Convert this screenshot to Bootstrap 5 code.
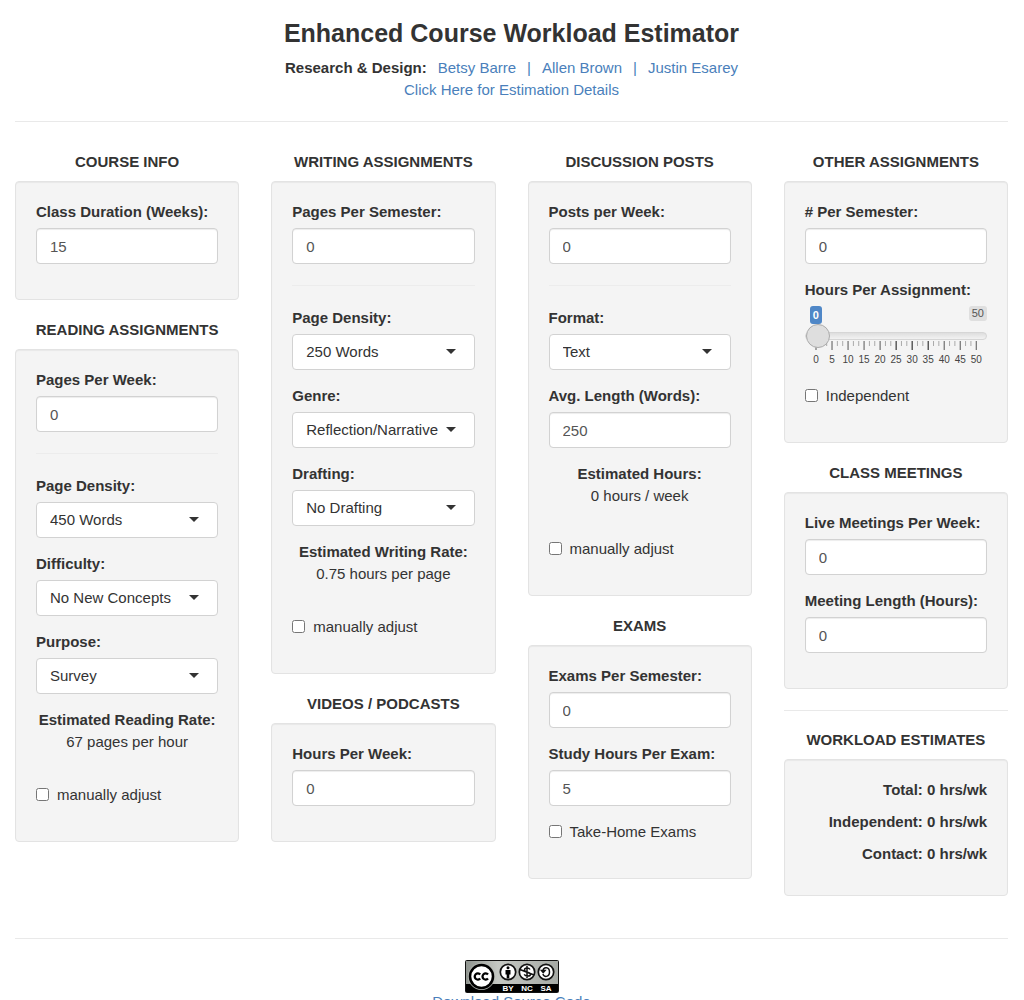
<!DOCTYPE html>
<html lang="en">
<head>
<meta charset="utf-8">
<meta name="viewport" content="width=device-width, initial-scale=1">
<title>Enhanced Course Workload Estimator</title>
<link href="https://cdn.jsdelivr.net/npm/bootstrap@5.3.0/dist/css/bootstrap.min.css" rel="stylesheet">
<style>
  body { font-family: "Liberation Sans", Arial, sans-serif; font-size: 15px; line-height: 22px; color: #333; background: #fff; }
  a { color: #4a7fbb; text-decoration: none; }
  a:hover { text-decoration: underline; }
  hr { border-color: #e9e9e9; opacity: 1; margin: 20px 0; }
  .page-shell { padding: 20px 16px 20px 15px; }
  .page-title { font-size: 25px; line-height: 27px; font-weight: 700; margin-bottom: 10px; }
  .people { gap: 11px; }
  .estimator { --bs-gutter-x: 32px; margin-top: 31px; }
  .section-title { font-size: 15px; line-height: 18px; font-weight: 700; text-align: center; margin: 0 0 10px; white-space: nowrap; }
  .well { background: #f4f4f4; border: 1px solid #e3e3e3; border-radius: 4px; box-shadow: inset 0 1px 1px rgba(0,0,0,.05); padding: 19px 20px 20px; margin-bottom: 21px; }
  .well hr { border-color: #ececec; margin: 21px 0; }
  .field { margin-bottom: 15px; }
  .field > label { display: block; font-weight: 700; line-height: 21px; margin-bottom: 6px; white-space: nowrap; }
  .field .form-control, .field .form-select { height: 36px; font-size: 15px; line-height: 22px; padding: 6px 13px; border: 1px solid #d2d2d2; border-radius: 4px; color: #555; background-color: #fff; }
  .field .form-control { box-shadow: inset 0 1px 1px rgba(0,0,0,.075); }
  .field .form-select { color: #333; padding-right: 30px; background-position: right 18px top 14px; background-size: 10px 5px;
    background-image: url("data:image/svg+xml,%3Csvg xmlns='http://www.w3.org/2000/svg' viewBox='0 0 10 5'%3E%3Cpath fill='%23333' d='M0 0h10L5 5z'/%3E%3C/svg%3E"); }
  .tick-row { display: flex; align-items: center; gap: 8px; height: 21px; margin-bottom: 16px; }
  .tick-row input { width: 13px; height: 13px; margin: 0; }
  .estimate { text-align: center; margin-bottom: 31px; white-space: nowrap; }
  .slider-head { display: flex; justify-content: space-between; align-items: flex-start; font-size: 11px; line-height: 15px; height: 18px; }
  .slider-head span { border-radius: 3px; padding: 0 3px; color: #555; background: #dfdfdf; }
  .slider-head .slider-now { background: #4f87c7; color: #fff; margin-left: 5px; line-height: 18px; font-weight: 700; }
  .hours-range { appearance: none; -webkit-appearance: none; display: block; position: relative; z-index: 1; width: 100%; height: 24px; margin: 0; background: none; }
  .hours-range::-webkit-slider-runnable-track { height: 8px; border: 1px solid #d6d6d6; border-radius: 8px; background: linear-gradient(#dedede, #f2f2f2); }
  .hours-range::-webkit-slider-thumb { -webkit-appearance: none; width: 24px; height: 24px; margin-top: -9px; border: 1px solid #ababab; border-radius: 50%; background: #dedede; }
  .scale-wrap { padding: 0 11px; margin-top: -7px; height: 29px; }
  .scale-wrap svg { display: block; width: 100%; height: 28px; overflow: visible; font-size: 10px; fill: #444; }
  .totals p { font-weight: 700; text-align: right; margin-bottom: 10px; }
  .foot-rule { margin: 21px 0; }
  .source-link { display: block; line-height: 18px; }
</style>
<script src="https://cdn.jsdelivr.net/npm/bootstrap@5.3.0/dist/js/bootstrap.bundle.min.js"></script>
</head>
<body>
<div class="container-fluid page-shell">
  <header class="text-center">
    <h1 class="page-title">Enhanced Course Workload Estimator</h1>
    <div class="d-flex flex-wrap justify-content-center people">
      <strong>Research &amp; Design:</strong>
      <a href="#">Betsy Barre</a><a href="#">|</a><a href="#">Allen Brown</a><a href="#">|</a><a href="#">Justin Esarey</a>
    </div>
    <a href="#">Click Here for Estimation Details</a>
  </header>
  <hr>

  <main class="row estimator row-cols-1 row-cols-sm-2 row-cols-md-4">
    <div class="col">
      <h2 class="section-title">COURSE INFO</h2>
      <div class="well">
        <div class="field"><label for="weeks">Class Duration (Weeks):</label><input class="form-control" id="weeks" value="15"></div>
      </div>
      <h2 class="section-title">READING ASSIGNMENTS</h2>
      <div class="well">
        <div class="field"><label for="readPages">Pages Per Week:</label><input class="form-control" id="readPages" value="0"></div>
        <hr>
        <div class="field"><label for="readDensity">Page Density:</label><select class="form-select" id="readDensity"><option>450 Words</option></select></div>
        <div class="field"><label for="difficulty">Difficulty:</label><select class="form-select" id="difficulty"><option>No New Concepts</option></select></div>
        <div class="field"><label for="purpose">Purpose:</label><select class="form-select" id="purpose"><option>Survey</option></select></div>
        <div class="estimate"><strong>Estimated Reading Rate:</strong><br>67 pages per hour</div>
        <div class="tick-row"><input type="checkbox" id="readAdjust"><label for="readAdjust">manually adjust</label></div>
      </div>
    </div>

    <div class="col">
      <h2 class="section-title">WRITING ASSIGNMENTS</h2>
      <div class="well">
        <div class="field"><label for="writePages">Pages Per Semester:</label><input class="form-control" id="writePages" value="0"></div>
        <hr>
        <div class="field"><label for="writeDensity">Page Density:</label><select class="form-select" id="writeDensity"><option>250 Words</option></select></div>
        <div class="field"><label for="genre">Genre:</label><select class="form-select" id="genre"><option>Reflection/Narrative</option></select></div>
        <div class="field"><label for="drafting">Drafting:</label><select class="form-select" id="drafting"><option>No Drafting</option></select></div>
        <div class="estimate"><strong>Estimated Writing Rate:</strong><br>0.75 hours per page</div>
        <div class="tick-row"><input type="checkbox" id="writeAdjust"><label for="writeAdjust">manually adjust</label></div>
      </div>
      <h2 class="section-title">VIDEOS / PODCASTS</h2>
      <div class="well">
        <div class="field"><label for="video">Hours Per Week:</label><input class="form-control" id="video" value="0"></div>
      </div>
    </div>

    <div class="col">
      <h2 class="section-title">DISCUSSION POSTS</h2>
      <div class="well">
        <div class="field"><label for="posts">Posts per Week:</label><input class="form-control" id="posts" value="0"></div>
        <hr>
        <div class="field"><label for="format">Format:</label><select class="form-select" id="format"><option>Text</option></select></div>
        <div class="field"><label for="postLength">Avg. Length (Words):</label><input class="form-control" id="postLength" value="250"></div>
        <div class="estimate"><strong>Estimated Hours:</strong><br>0 hours / week</div>
        <div class="tick-row"><input type="checkbox" id="postAdjust"><label for="postAdjust">manually adjust</label></div>
      </div>
      <h2 class="section-title">EXAMS</h2>
      <div class="well">
        <div class="field"><label for="exams">Exams Per Semester:</label><input class="form-control" id="exams" value="0"></div>
        <div class="field"><label for="study">Study Hours Per Exam:</label><input class="form-control" id="study" value="5"></div>
        <div class="tick-row"><input type="checkbox" id="takeHome"><label for="takeHome">Take-Home Exams</label></div>
      </div>
    </div>

    <div class="col">
      <h2 class="section-title">OTHER ASSIGNMENTS</h2>
      <div class="well">
        <div class="field"><label for="others"># Per Semester:</label><input class="form-control" id="others" value="0"></div>
        <div class="field"><label for="otherHours">Hours Per Assignment:</label>
          <div class="slider-head"><span class="slider-now">0</span><span>50</span></div>
          <input type="range" class="hours-range" id="otherHours" min="0" max="50" value="0">
          <div class="scale-wrap"><svg id="scale" aria-hidden="true"></svg></div>
        </div>
        <div class="tick-row"><input type="checkbox" id="independent"><label for="independent">Independent</label></div>
      </div>
      <h2 class="section-title">CLASS MEETINGS</h2>
      <div class="well">
        <div class="field"><label for="meetings">Live Meetings Per Week:</label><input class="form-control" id="meetings" value="0"></div>
        <div class="field"><label for="meetLength">Meeting Length (Hours):</label><input class="form-control" id="meetLength" value="0"></div>
      </div>
      <hr>
      <h2 class="section-title">WORKLOAD ESTIMATES</h2>
      <div class="well totals">
        <p>Total: 0 hrs/wk</p>
        <p>Independent: 0 hrs/wk</p>
        <p>Contact: 0 hrs/wk</p>
      </div>
    </div>
  </main>

  <hr class="foot-rule">
  <footer class="text-center">
    <a href="#" class="d-block" aria-label="Creative Commons BY NC SA">
      <svg class="d-block mx-auto" width="94" height="33" viewBox="0 0 94 33">
        <defs><linearGradient id="plate" x2="1" y2="0"><stop offset="0" stop-color="#8f948f"/><stop offset=".35" stop-color="#c5c8c3"/><stop offset="1" stop-color="#a6aaa5"/></linearGradient></defs>
        <rect x=".5" y=".5" width="93" height="32" rx="1" fill="url(#plate)" stroke="#111"/>
        <path d="M1 24h92v8H1z" fill="#000"/>
        <circle cx="16.500" cy="16.500" r="13.500" fill="#b5b8b3"/>
        <circle cx="16.500" cy="16.500" r="11.500" fill="#fff" stroke="#000" stroke-width="2.500"/>
        <path d="M15.200 14.500a3.100 3.100 0 1 0 0 4M23 14.500a3.100 3.100 0 1 0 0 4" fill="none" stroke="#000" stroke-width="2.300"/>
        <g fill="#fff" stroke="#111" stroke-width="1.700"><circle cx="43" cy="12" r="7.700"/><circle cx="62" cy="12" r="7.700"/><circle cx="81" cy="12" r="7.700"/></g>
        <circle cx="43" cy="7.800" r="1.500"/><path d="M40.500 10h5v4.500h-1.200V18.500h-2.600V14.500h-1.200z"/>
        <path d="M65 9.500c-1-2-5.500-2-5.500.5 0 2.700 6 1.600 6 4.200 0 2.400-5 2.400-6.300.2M62 6v12M55 9.500l14 5.500" fill="none" stroke="#111" stroke-width="1.500"/>
        <path d="M78 10.500c.5-4 6.500-4 6.500 1.500s-6 5.500-6.500 2M76.500 10.500h3.500l-1.800 2z" fill="none" stroke="#111" stroke-width="1.500"/>
        <g fill="#fff" font-family="Liberation Sans, sans-serif" font-size="8" font-weight="700" text-anchor="middle"><text x="43" y="31">BY</text><text x="62" y="31">NC</text><text x="81" y="31">SA</text></g>
      </svg>
    </a>
    <a href="#" class="source-link">Download Source Code</a>
  </footer>
</div>
<script>
  // Scale below the slider: a long mark every five hours, two short ones between
  const scale = document.getElementById('scale');
  let marks = '';
  for (let i = 0; i <= 30; i++) {
    const x = (i / 30 * 100) + '%', major = i % 3 === 0, hours = i / 3 * 5;
    const dark = major && hours >= 25 && hours <= 35;
    marks += `<line x1="${x}" x2="${x}" y1="0" y2="${major ? 9 : 5}" stroke="${dark ? '#111' : major ? '#555' : '#aaa'}"/>`;
    if (major) marks += `<text x="${x}" y="22" text-anchor="middle">${hours}</text>`;
  }
  scale.innerHTML = marks;
</script>
</body>
</html>
